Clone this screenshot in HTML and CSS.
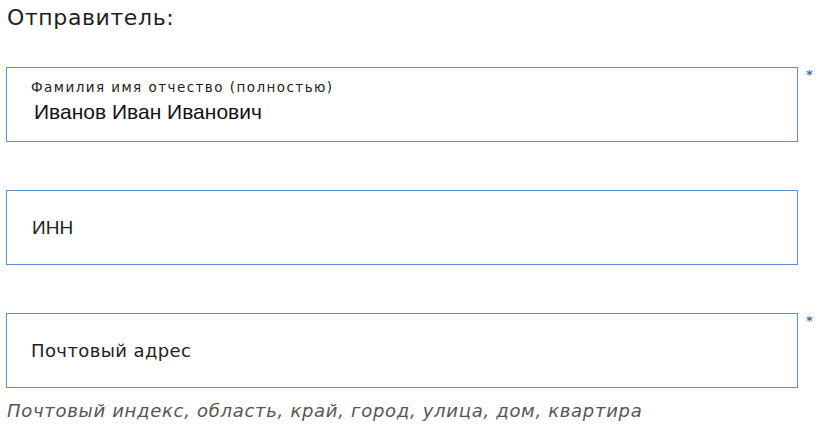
FILE: index.html
```html
<!DOCTYPE html>
<html lang="ru">
<head>
<meta charset="utf-8">
<link rel="stylesheet" href="styles.css">
</head>
<body>
<div class="form">
  <h2 class="title">Отправитель:</h2>
  <div class="row">
    <div class="field filled">
      <div class="label">Фамилия имя отчество (полностью)</div>
      <div class="value">Иванов Иван Иванович</div>
    </div>
    <span class="req">*</span>
  </div>
  <div class="row">
    <div class="field">
      <div class="placeholder inn">ИНН</div>
    </div>
    <span class="req"></span>
  </div>
  <div class="row last">
    <div class="field">
      <div class="placeholder">Почтовый адрес</div>
    </div>
    <span class="req">*</span>
  </div>
  <div class="hint">Почтовый индекс, область, край, город, улица, дом, квартира</div>
</div>
</body>
</html>
```
FILE: styles.css
```css
html, body { margin: 0; padding: 0; background: #fff; }
body { font-family: "DejaVu Sans", "Open Sans", sans-serif; color: #222; }
.form { padding: 0 0 0 6px; width: 814px; }
.title { margin: 0; padding: 3px 0 0 1px; font-size: 22px; letter-spacing: 0.6px; font-weight: 400; line-height: 30px; color: #1f1f1f; height: 67px; box-sizing: border-box; }
.row { display: flex; align-items: flex-start; margin-bottom: 48px; }
.row.last { margin-bottom: 8px; }
.field { width: 792px; height: 75px; box-sizing: border-box; border: 1px solid #5a8fd3; display: flex; flex-direction: column; justify-content: center; padding-left: 24px; }
.field.filled { justify-content: flex-start; padding-top: 11px; }
.req { width: 14px; padding-left: 8px; color: #3d6fb5; font-size: 13px; line-height: 10px; padding-top: 3px; font-weight: bold; }
.label { font-size: 13.5px; letter-spacing: 1.45px; line-height: 17px; color: #222; margin-bottom: 3px; }
.value { font-family: "Liberation Sans", Arial, sans-serif; font-size: 21px; line-height: 26px; padding-left: 3px; color: #111; }
.placeholder { font-size: 18px; letter-spacing: 0.4px; line-height: 24px; color: #222; }
.placeholder.inn { font-family: "Liberation Sans", Arial, sans-serif; font-size: 19px; letter-spacing: 0; padding-left: 1px; }
.hint { font-style: italic; font-size: 18px; letter-spacing: 0.7px; line-height: 22px; color: #555; padding-left: 1px; padding-top: 4px; }
```
